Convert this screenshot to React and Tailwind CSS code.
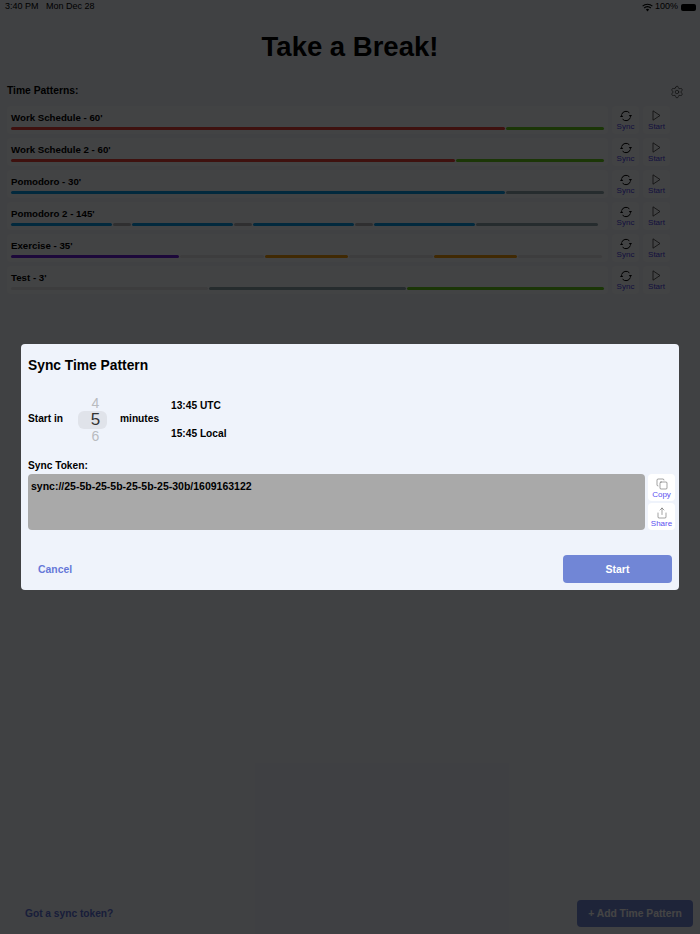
import { Settings, Copy, Share } from 'lucide-react'

const RED = '#e8403a'
const GREEN = '#66cc1c'
const BLUE = '#0a9ae6'
const DARK = '#8ea4ac'
const GRAY = '#b0b2b4'
const LIGHT = '#e4e5e8'
const PURPLE = '#6a1fd8'
const ORANGE = '#f09a0c'

const patterns = [
  { name: "Work Schedule - 60'", bars: [[495, RED], [98, GREEN]] },
  { name: "Work Schedule 2 - 60'", bars: [[445, RED], [148, GREEN]] },
  { name: "Pomodoro - 30'", bars: [[495, BLUE], [98, DARK]] },
  {
    name: "Pomodoro 2 - 145'",
    bars: [[101, BLUE], [18, GRAY], [101, BLUE], [18, GRAY], [101, BLUE], [18, GRAY], [101, BLUE], [122, DARK]],
  },
  {
    name: "Exercise - 35'",
    bars: [[168, PURPLE], [84, LIGHT], [83, ORANGE], [84, LIGHT], [83, ORANGE], [84, LIGHT]],
  },
  { name: "Test - 3'", bars: [[197, LIGHT], [197, DARK], [197, GREEN]] },
]

function SyncIcon() {
  return (
    <svg width="12" height="12" viewBox="0 0 12 12" fill="none" stroke="#000" strokeWidth="1">
      <path d="M1.6 4.6A4.6 4.6 0 0 1 9.4 2.8" />
      <path d="M10.4 7.4A4.6 4.6 0 0 1 2.6 9.2" />
      <path d="M8.8 5h3.2l-1.6 2.2z" fill="#000" stroke="none" />
      <path d="M3.2 7H0l1.6-2.2z" fill="#000" stroke="none" />
    </svg>
  )
}

function PlayIcon() {
  return (
    <svg width="9" height="11" viewBox="0 0 9 11" fill="none" stroke="#333" strokeWidth="0.8">
      <path d="M1 .8v9.4l7-4.7z" strokeLinejoin="round" />
    </svg>
  )
}

function SmallButton({ icon, label }) {
  return (
    <div className="w-[27px] h-[27px] bg-white rounded-sm flex flex-col items-center justify-center pt-[1px]">
      {icon}
      <span className="text-[8px] leading-[9px] text-[#5b4ff0]">{label}</span>
    </div>
  )
}

function PatternRow({ item }) {
  return (
    <div className="flex gap-[4px] h-[28px]">
      <div className="w-[601px] h-[28px] bg-[#f7f9fd] rounded-sm px-[4px] pt-[5px]">
        <div className="text-[9.7px] leading-[14px] font-bold text-black">{item.name}</div>
        <div className="flex gap-[1px] mt-[2px]">
          {item.bars.map((b, i) => (
            <div key={i} className="h-[3px] rounded-full" style={{ width: b[0], backgroundColor: b[1] }} />
          ))}
        </div>
      </div>
      <div className="w-[27px] bg-[#f7f9fd] rounded-sm flex flex-col items-center pt-[4px]">
        <SyncIcon />
        <span className="text-[8px] leading-[10px] text-[#4a3fe8]">Sync</span>
      </div>
      <div className="w-[27px] bg-[#f7f9fd] rounded-sm flex flex-col items-center pt-[4px]">
        <PlayIcon />
        <span className="text-[8px] leading-[10px] mt-[1px] text-[#4a3fe8]">Start</span>
      </div>
    </div>
  )
}

export default function App() {
  return (
    <div className="relative w-[700px] h-[934px] overflow-hidden bg-[#eff3fb] font-['Liberation_Sans',Arial,sans-serif] flex flex-col">
      <div className="h-[14px] flex items-center justify-between px-[5px] text-[9px] text-black shrink-0">
        <span>3:40 PM&nbsp;&nbsp; Mon Dec 28</span>
        <div className="flex items-center gap-[2px]">
          <svg width="11" height="9" viewBox="0 0 11 9" fill="none" stroke="#000" strokeWidth="1.1">
            <path d="M.6 3.2a7 7 0 0 1 9.8 0" />
            <path d="M2.2 5a4.6 4.6 0 0 1 6.6 0" />
            <path d="M5.5 8.4L3.9 6.6a2.3 2.3 0 0 1 3.2 0z" fill="#000" stroke="none" />
          </svg>
          <span>100%</span>
          <div className="ml-[1px] w-[15px] h-[7px] bg-black rounded-[2px] mr-[-1px]" />
        </div>
      </div>

      <h1 className="text-center text-[27.5px] leading-[32px] font-bold text-black mt-[17px]">Take a Break!</h1>

      <div className="flex items-center justify-between pl-[7px] pr-[16px] mt-[19px] h-[18px]">
        <span className="text-[10.3px] font-bold text-black">Time Patterns:</span>
        <Settings size={14} className="text-[#333] mt-[2px]" strokeWidth={1.2} />
      </div>

      <div className="flex flex-col gap-[4px] pl-[7px] mt-[6px]">
        {patterns.map((p) => (
          <PatternRow key={p.name} item={p} />
        ))}
      </div>

      <div className="mt-auto flex items-center justify-between pl-[25px] pr-[7px] pb-[7px]">
        <span className="text-[10.2px] font-bold text-[#5b6fd8]">Got a sync token?</span>
        <div className="w-[116px] h-[27px] rounded-sm bg-[#7186d6] text-white text-[10.3px] font-bold flex items-center justify-center">
          + Add Time Pattern
        </div>
      </div>

      {/* dim layer and dialog */}
      <div className="absolute inset-0 bg-black/[.735] flex items-center justify-center">
        <div className="w-[658px] h-[246px] bg-[#eff3fb] rounded-sm pl-[7px] pr-[4px] flex flex-col text-black">
          <div className="text-[13.8px] leading-[18px] font-bold mt-[13px]">Sync Time Pattern</div>

          <div className="flex items-center mt-[14px] h-[60px] text-[10.2px] font-bold">
            <span className="w-[50px]">Start in</span>
            <div className="w-[29px] flex flex-col items-center font-normal">
              <span className="text-[14px] leading-[16px] pl-[6px] text-[#b9bbbf]">4</span>
              <span className="w-[29px] h-[18px] bg-[#e0e3ea] rounded-md text-[17px] leading-[18px] text-center pl-[6px] text-[#333]">5</span>
              <span className="text-[14px] leading-[14px] pl-[6px] text-[#b9bbbf]">6</span>
            </div>
            <span className="ml-[13px] w-[51px]">minutes</span>
            <div className="flex flex-col gap-[15px] mt-[1px]">
              <span className="leading-[13px]">13:45 UTC</span>
              <span className="leading-[13px]">15:45 Local</span>
            </div>
          </div>

          <div className="text-[10.2px] leading-[13px] font-bold mt-[10px]">Sync Token:</div>

          <div className="flex gap-[3px] mt-[2px]">
            <div className="w-[617px] shrink-0 h-[56px] bg-[#a9a9a9] rounded-sm px-[3px] py-[5px] text-[10.5px] leading-[14px] font-bold">
              sync://25-5b-25-5b-25-5b-25-30b/1609163122
            </div>
            <div className="flex flex-col gap-[2px]">
              <SmallButton icon={<Copy size={12} className="text-[#444]" strokeWidth={1} />} label="Copy" />
              <SmallButton icon={<Share size={12} className="text-[#444]" strokeWidth={1} />} label="Share" />
            </div>
          </div>

          <div className="flex items-center justify-between mt-[25px] pl-[10px] pr-[3px]">
            <span className="text-[10.4px] font-bold text-[#6678d8] pt-[1px]">Cancel</span>
            <div className="w-[109px] h-[28px] rounded-sm bg-[#7186d6] text-white text-[10.5px] font-bold flex items-center justify-center pt-[1px]">
              Start
            </div>
          </div>
        </div>
      </div>
    </div>
  )
}
